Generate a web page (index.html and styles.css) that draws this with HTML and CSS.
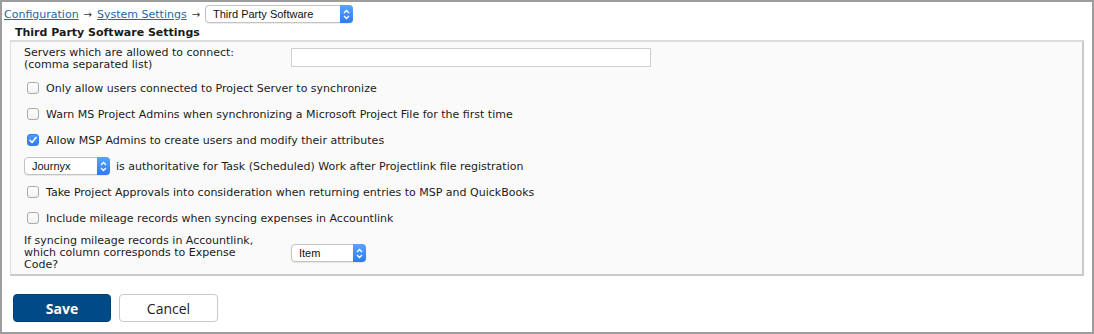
FILE: index.html
```html
<!DOCTYPE html>
<html>
<head>
<meta charset="utf-8">
<link rel="stylesheet" href="styles.css">
</head>
<body>
<div class="frame">
  <div class="crumbs">
    <a href="#" class="link">Configuration</a><span class="arr">→</span><a href="#" class="link">System Settings</a><span class="arr">→</span>
    <span class="sel sel-crumb"><span class="sel-text">Third Party Software</span><span class="sel-btn"><svg width="7" height="11" viewBox="0 0 7 11"><path d="M1 4 L3.5 1.5 L6 4 M1 7 L3.5 9.5 L6 7" fill="none" stroke="#fff" stroke-width="1.3"/></svg></span></span>
  </div>
  <div class="heading">Third Party Software Settings</div>
  <div class="box">
    <div class="row-form first">
      <div class="label">Servers which are allowed to connect:<br>(comma separated list)</div>
      <div class="input"></div>
    </div>
    <div class="row"><span class="cb"></span><span>Only allow users connected to Project Server to synchronize</span></div>
    <div class="row"><span class="cb"></span><span>Warn MS Project Admins when synchronizing a Microsoft Project File for the first time</span></div>
    <div class="row"><span class="cb checked"><svg width="12" height="12" viewBox="0 0 12 12"><path d="M3 6.3 L5.1 8.5 L9 3.6" fill="none" stroke="#fff" stroke-width="1.6" stroke-linecap="round" stroke-linejoin="round"/></svg></span><span>Allow MSP Admins to create users and modify their attributes</span></div>
    <div class="row row-sel"><span class="sel sel-journyx"><span class="sel-text">Journyx</span><span class="sel-btn"><svg width="7" height="11" viewBox="0 0 7 11"><path d="M1 4 L3.5 1.5 L6 4 M1 7 L3.5 9.5 L6 7" fill="none" stroke="#fff" stroke-width="1.3"/></svg></span></span><span>is authoritative for Task (Scheduled) Work after Projectlink file registration</span></div>
    <div class="row"><span class="cb"></span><span>Take Project Approvals into consideration when returning entries to MSP and QuickBooks</span></div>
    <div class="row"><span class="cb"></span><span>Include mileage records when syncing expenses in Accountlink</span></div>
    <div class="row-form last">
      <div class="label">If syncing mileage records in Accountlink,<br>which column corresponds to Expense<br>Code?</div>
      <span class="sel sel-item"><span class="sel-text">Item</span><span class="sel-btn"><svg width="7" height="11" viewBox="0 0 7 11"><path d="M1 4 L3.5 1.5 L6 4 M1 7 L3.5 9.5 L6 7" fill="none" stroke="#fff" stroke-width="1.3"/></svg></span></span>
    </div>
  </div>
  <div class="buttons">
    <button class="btn btn-save">Save</button>
    <button class="btn btn-cancel">Cancel</button>
  </div>
</div>
</body>
</html>
```

FILE: styles.css
```css
html, body {
  margin: 0;
  padding: 0;
  background: #fff;
}
body {
  font-family: "DejaVu Sans", Verdana, sans-serif;
  font-size: 11px;
  color: #1a1a1a;
}
.frame {
  width: 1094px;
  height: 334px;
  box-sizing: border-box;
  border: 2px solid #9d9d9d;
  padding: 3px 8px 0 0;
}
.crumbs {
  display: flex;
  align-items: center;
  height: 18px;
  padding-left: 2px;
}
.link {
  color: #2466a8;
  text-decoration: underline;
}
.arr {
  margin: 0 5px;
  font-size: 10px;
  color: #333;
}
.sel {
  display: inline-flex;
  align-items: stretch;
  box-sizing: border-box;
  height: 18px;
  border: 1px solid #c2c2c2;
  border-radius: 4px;
  background: #fff;
  box-shadow: 0 1px 1px rgba(0,0,0,0.08);
  font-family: "Liberation Sans", Arial, sans-serif;
  font-size: 11px;
  color: #111;
}
.sel-text {
  flex: 1;
  display: flex;
  align-items: center;
  padding-left: 7px;
}
.sel-btn {
  width: 13px;
  margin: -1px -1px -1px 0;
  border-radius: 0 4px 4px 0;
  background: linear-gradient(#5aa2fb, #2f7bf0);
  display: flex;
  align-items: center;
  justify-content: center;
}
.sel-crumb {
  width: 148px;
}
.sel-journyx {
  width: 86px;
}
.sel-item {
  width: 75px;
}
.heading {
  margin-top: 3px;
  padding-left: 13px;
  font-weight: bold;
  line-height: 13px;
}
.box {
  margin: 1px 0 0 8px;
  background: #fafafa;
  border-style: solid;
  border-color: #dcdcdc #c9c9c9 #c9c9c9 #dedede;
  border-width: 2px 2px 2px 1px;
  padding: 0 0 3px 13px;
}
.row-form {
  display: grid;
  grid-template-columns: 267px 360px;
  align-items: start;
}
.row-form .label {
  line-height: 12px;
}
.first {
  padding-top: 5px;
  height: 33px;
  box-sizing: border-box;
}
.input {
  margin-top: 1px;
  height: 19px;
  box-sizing: border-box;
  border: 1px solid #cfcfcf;
  background: #fff;
}
.last {
  grid-template-columns: 267px 75px;
  align-items: center;
  padding-top: 4px;
}
.row {
  display: flex;
  align-items: center;
  height: 26px;
  gap: 7px;
}
.row-sel {
  gap: 6px;
}
.cb {
  width: 12px;
  height: 12px;
  box-sizing: border-box;
  margin-left: 3px;
  border: 1px solid #a9a9a9;
  border-radius: 3px;
  background: linear-gradient(#fff, #f1f1f1);
  display: inline-block;
  position: relative;
}
.cb.checked {
  border-color: #2d7ff3;
  background: linear-gradient(#4f9cfb, #2f7cf2);
}
.cb.checked svg {
  position: absolute;
  left: -1px;
  top: -1px;
}
.buttons {
  display: flex;
  gap: 8px;
  margin: 18px 0 0 11px;
}
.btn {
  height: 28px;
  box-sizing: border-box;
  border-radius: 4px;
  font-family: "Open Sans", sans-serif;
  font-size: 14px;
  padding: 0;
  cursor: pointer;
}
.btn-save {
  width: 98px;
  background: #004b85;
  border: 1px solid #003f72;
  color: #fff;
  font-weight: bold;
}
.btn-cancel {
  width: 99px;
  background: #fff;
  border: 1px solid #c8c8c8;
  color: #222;
}
```
